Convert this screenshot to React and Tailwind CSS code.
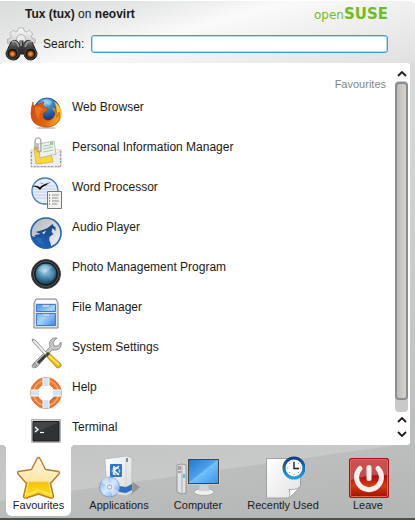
import React from "react";

function BinocularsIcon() {
  return (
    <svg viewBox="0 0 34 34" className="size-[34px] shrink-0" aria-hidden="true">
      <defs>
        <linearGradient id="gear" x1="0" y1="0" x2="0" y2="1">
          <stop offset="0" stopColor="#fafafa" />
          <stop offset="1" stopColor="#c6c6c6" />
        </linearGradient>
        <radialGradient id="lens">
          <stop offset="0" stopColor="#ffb050" />
          <stop offset="0.5" stopColor="#d56a12" />
          <stop offset="1" stopColor="#5b2505" />
        </radialGradient>
        <linearGradient id="barrel" x1="0" y1="0" x2="0" y2="1">
          <stop offset="0" stopColor="#8a8a8a" />
          <stop offset="0.4" stopColor="#3a3a3a" />
          <stop offset="1" stopColor="#101010" />
        </linearGradient>
      </defs>
      <path
        d="M14.500 1h5l.7 3 2.600 1 2.700-1.700 3.400 3.300-1.700 2.700.9 2 3 .8v4h-3l-1 3H7.500l-1-3h-3v-4l3-.8.9-2-1.700-2.700L9.100 3.300 11.800 5l2-1z"
        fill="url(#gear)"
        stroke="#aaa"
        strokeWidth="0.8"
      />
      <circle cx="17" cy="12" r="4.500" fill="#ececec" stroke="#b5b5b5" />
      <path d="M7 15q3-3 6-1l3 4h3l3-4q3-2 6 1l5 11q0 6-6 7-6 0-7-6h-4q-1 6-7 6-7-1-7-7z" fill="url(#barrel)" stroke="#242424" />
      <path d="M8 15q3-2 5 1l2 4M28 15q-3-2-5 1l-2 4" fill="none" stroke="#aaa" strokeWidth="1.2" />
      <path d="M15.500 13.500h4v7h-4z" fill="#333" />
      <path d="M16 14h2v5h-2z" fill="#888" />
      <circle cx="8.500" cy="26.500" r="5.500" fill="#171717" stroke="#555" />
      <circle cx="26.500" cy="26.500" r="5.500" fill="#171717" stroke="#555" />
      <circle cx="8.500" cy="27" r="3.600" fill="url(#lens)" />
      <circle cx="26.500" cy="27" r="3.600" fill="url(#lens)" />
    </svg>
  );
}

function FirefoxIcon() {
  return (
    <>
      <defs>
        <radialGradient id="ffGlobe" cx="0.45" cy="0.15" r="0.8">
          <stop offset="0" stopColor="#8fd0f2" />
          <stop offset="0.4" stopColor="#2f7cc0" />
          <stop offset="1" stopColor="#0c2468" />
        </radialGradient>
        <linearGradient id="ffTail" x1="0" y1="0.3" x2="1" y2="0.5">
          <stop offset="0" stopColor="#d9480c" />
          <stop offset="0.6" stopColor="#e06a10" />
          <stop offset="1" stopColor="#f3a526" />
        </linearGradient>
      </defs>
      <ellipse cx="16" cy="31" rx="10" ry="1.500" fill="#000" opacity="0.2" />
      <circle cx="17" cy="14" r="13" fill="url(#ffGlobe)" stroke="#14397c" strokeWidth="0.8" />
      <path d="M14 4q4-2 8 1l-2 3-4-1-3 2z" fill="#a5dcf5" opacity="0.6" />
      <path d="M25 5q6 4 6.500 12-1 9-9 12 4-7 3-13l-3-5q3 0 4 3 0-5-2-9z" fill="#f9cb3c" stroke="#dc9318" strokeWidth="0.500" />
      <path
        d="M3 5q0 3 1 4 2-2 5-1 2-3 5-3-2 3 0 5l4 1q0 3-3 4l-2 2q-1 4 3 6 4 1 7-2 3-3 2-9 3 4 2 8 2-2 2-5 2 7-2 11-5 5-13 4Q1 28 1 17 1 10 3 5z"
        fill="url(#ffTail)"
        stroke="#b43b08"
        strokeWidth="0.6"
      />
      <path d="M5 10q3-1 5 0 2 2 4 2-3 2-4 4-2 3 0 7-5-3-5-13z" fill="#f08a2c" opacity="0.6" />
    </>
  );
}

function MailIcon() {
  return (
    <>
      <path d="M1 13h30v17H1z" fill="#eceef2" stroke="#c6c8cc" />
      <path d="M1.500 15v15M30.500 14v15M4 29.500h26" stroke="#dd8080" strokeWidth="1.200" strokeDasharray="2 5" />
      <path d="M1.500 18v12M30.500 17v12M7 29.500h23" stroke="#7f9fd8" strokeWidth="1.200" strokeDasharray="2 5" />
      <path d="M2 13l12 12h5l11-12" fill="#f6f7f9" stroke="#d0d3d8" strokeWidth="0.700" />
      <path d="M4 10l16 2 3 13-17 2z" fill="#fbd93c" stroke="#d6a518" strokeWidth="0.700" />
      <path d="M8 7l16-3 2 13-16 4z" fill="#edf2ea" stroke="#a9b4a6" strokeWidth="0.800" />
      <path d="M13 9l8-1M13 12l10-2M13 15l10-2" stroke="#a8c4b2" />
      <path d="M20 5h3v3h-3z" fill="#9fc9a6" />
      <path d="M5 13V5q0-4 3-4t3 4v8q0 2-2 2t-2-2V6" fill="none" stroke="#9b9b9b" strokeWidth="1.200" />
    </>
  );
}

function WriterIcon() {
  return (
    <>
      <circle cx="15" cy="14" r="13" fill="#e5effa" stroke="#4779bb" strokeWidth="1.300" />
      <path d="M5 9h20M3 12h24M3 15h24M3 18h23M5 21h20" stroke="#bdcce5" />
      <path d="M9 6q4-1 5 1.500Q17 5 21 5.500q-4 1-6 3.500-2-3-6-3z" fill="#55606c" />
      <path d="M2 9q6-1 8 1.500Q12 7 18 7q-5 2-8 6-2-3-8-4z" fill="#080808" />
      <path d="M17.500 14.500h14v17h-14z" fill="#f2f2ef" stroke="#777" />
      <path d="M22 18h7M22 21h6M22 24h7M22 27h5" stroke="#8f8f8f" />
      <path d="M19 18h1M19 21h1M19 24h1M19 27h1" stroke="#444" />
    </>
  );
}

function AmarokIcon() {
  return (
    <>
      <defs>
        <linearGradient id="moon" x1="0" y1="0" x2="1" y2="1">
          <stop offset="0" stopColor="#aeb2ba" />
          <stop offset="1" stopColor="#f6f6f6" />
        </linearGradient>
        <linearGradient id="wolf" x1="0" y1="0" x2="0" y2="1">
          <stop offset="0" stopColor="#1a4583" />
          <stop offset="1" stopColor="#1e63b8" />
        </linearGradient>
      </defs>
      <circle cx="16" cy="16" r="15" fill="url(#moon)" stroke="#2463ac" strokeWidth="1.600" />
      <path
        d="M1.500 19l4 1-1-2 6-1-5-2 7-2 5-2 5-4 1 2 2 1 0 4-3-3-1 4 2 2-4 3q-1 3 1 6l1 5q-5 1-9 .5Q4 28 1.500 19z"
        fill="url(#wolf)"
      />
      <path d="M12 16l4-2.500-2 3.500z" fill="#fff" />
      <path d="M5 22q4-3 7 0l2 6q-6-1-9-6z" fill="#2c74cc" opacity="0.600" />
    </>
  );
}

function LensIcon() {
  return (
    <>
      <defs>
        <radialGradient id="glass" cx="0.45" cy="0.35" r="0.65">
          <stop offset="0" stopColor="#b4dbed" />
          <stop offset="0.5" stopColor="#4c89ad" />
          <stop offset="1" stopColor="#12354f" />
        </radialGradient>
      </defs>
      <circle cx="16" cy="17" r="14.500" fill="#202020" stroke="#484848" />
      <circle cx="16" cy="17" r="12.500" fill="none" stroke="#5d5d5d" />
      <circle cx="16" cy="17" r="11" fill="url(#glass)" stroke="#0a1720" />
      <path d="M8 14q2-6 8-6l6 2-7 6z" fill="#d7edf6" opacity="0.3" />
      <path d="M17 17l8-4q1 8-5 11z" fill="#9bd1ed" opacity="0.2" />
    </>
  );
}

function CabinetIcon() {
  return (
    <>
      <defs>
        <linearGradient id="drawer" x1="0" y1="0" x2="1" y2="1">
          <stop offset="0" stopColor="#4b93e8" />
          <stop offset="0.500" stopColor="#a6d4fb" />
          <stop offset="1" stopColor="#3d86df" />
        </linearGradient>
      </defs>
      <path d="M6 2h20l2 4v25H4V6z" fill="#e1e1e1" stroke="#858585" />
      <path d="M7 3h18l2 3H5z" fill="#fafafa" />
      <path d="M6.500 7.500h19v7h-19zM6.500 16.500h19v12h-19z" fill="url(#drawer)" stroke="#3b7cc8" />
      <path d="M12 8h8v1l-1 1h-6l-1-1zM12 17h8v1l-1 1h-6l-1-1z" fill="#f5f5f5" stroke="#7393b5" strokeWidth="0.700" />
    </>
  );
}

function ToolsIcon() {
  return (
    <>
      <path d="M3 27L20 10q-2-7 4-9l3 0-4 4 1 4 4 0 3-4q1 7-5 8l-4 0L7 30q-5 2-5-1z" fill="#c8c8c8" stroke="#7c7c7c" strokeWidth="0.800" />
      <path d="M7 25l8-8 2 2-8 8z" fill="#3b3b3b" />
      <circle cx="5" cy="28" r="1.300" fill="#fff" stroke="#777" />
      <path d="M2 2l3 1 13 14-2 2L3 5z" fill="#eee" stroke="#777" strokeWidth="0.800" />
      <path d="M15 18l3-3 13 12q1 4-4 4z" fill="#efb310" stroke="#b27d06" strokeWidth="0.700" />
      <path d="M18 18l11 10" stroke="#ffe35b" strokeWidth="2" />
      <path d="M15 18l3-3 2 2-3 3z" fill="#444" />
    </>
  );
}

function HelpIcon() {
  return (
    <>
      <rect x="8" y="1" width="16" height="30" rx="3" fill="none" stroke="#d4d4d4" />
      <rect x="1" y="8" width="30" height="16" rx="3" fill="none" stroke="#d4d4d4" />
      <circle cx="16" cy="16" r="12" fill="none" stroke="#c96a34" strokeWidth="7" />
      <circle cx="16" cy="16" r="12" fill="none" stroke="#ef772e" strokeWidth="6" />
      <circle cx="16" cy="16" r="12.500" fill="none" stroke="#ffa76a" strokeWidth="1.500" />
      <path d="M13 1h6v8h-6zM13 23h6v8h-6zM1 13h8v6H1zM23 13h8v6h-8z" fill="#cfe3fb" />
      <path d="M13 1v8M19 1v8M13 23v8M19 23v8M1 13h8M1 19h8M23 13h8M23 19h8" stroke="#fff" />
      <path d="M20 26l2-4 4-1" fill="none" stroke="#777" />
    </>
  );
}

function TerminalIcon() {
  return (
    <>
      <path d="M1.500 2.500h29v23h-29z" fill="#c9cbcb" stroke="#b4b4b4" />
      <path d="M3 4.500h26v19.500H3z" fill="#303233" stroke="#191919" />
      <path d="M3.500 5h25L3.500 17z" fill="#424546" />
      <path d="M5 10l3 2.500-3 2.500" fill="none" stroke="#fff" strokeWidth="1.300" />
      <path d="M10 15.500h4" stroke="#fff" strokeWidth="1.200" />
    </>
  );
}

function StarIcon() {
  return (
    <>
      <defs>
        <linearGradient id="star" x1="0" y1="0" x2="0" y2="1">
          <stop offset="0" stopColor="#fff6e2" />
          <stop offset="0.580" stopColor="#fde6a4" />
          <stop offset="0.620" stopColor="#f2c40a" />
          <stop offset="1" stopColor="#ffe21e" />
        </linearGradient>
      </defs>
      <path
        d="M21.500 2.500q1 0 2 2l5 10 13 2q2 1 0 3l-8 9 3 13q0 2-3 1.500l-12-4-12 4q-3 .5-3-1.500l3-13-8-9q-2-2 0-3l13-2 5-10q1-2 2-2z"
        fill="url(#star)"
        stroke="#bf7a26"
        strokeWidth="1.400"
        strokeLinejoin="round"
      />
      <path d="M21.500 6l5 10 13 2-8 9 3 13-13-5-13 5 3-13-8-9 13-2z" fill="none" stroke="#fff8d6" opacity="0.600" />
    </>
  );
}

function ApplicationsIcon() {
  return (
    <>
      <defs>
        <linearGradient id="box" x1="0" y1="0" x2="1" y2="1">
          <stop offset="0" stopColor="#fff" />
          <stop offset="1" stopColor="#d4d7da" />
        </linearGradient>
        <linearGradient id="disc" x1="0" y1="0" x2="1" y2="1">
          <stop offset="0" stopColor="#6ea6df" />
          <stop offset="0.500" stopColor="#d6ebff" />
          <stop offset="1" stopColor="#5d96d6" />
        </linearGradient>
      </defs>
      <path d="M34 26l9 6-9 8z" fill="#000" opacity="0.220" />
      <path d="M8 4l22-3 5 2v35l-6 3-19-3z" fill="url(#box)" stroke="#b5b8bb" strokeWidth="0.800" />
      <path d="M29 3v38" stroke="#d4d4d4" />
      <path d="M22 31l7 1 6-3v6l-6 3-7-1z" fill="#2f70be" />
      <rect x="13" y="9" width="12" height="13" rx="1" fill="#3273c2" />
      <circle cx="19" cy="16" r="3.500" fill="none" stroke="#c3dbf6" strokeWidth="1.500" strokeDasharray="1.500 1" />
      <path d="M17 11v9M22 11l-5 4.500 5 4.500" fill="none" stroke="#fff" strokeWidth="1.400" />
      <path d="M29 3h2v4h-2z" fill="#888" />
      <circle cx="12.500" cy="32" r="10" fill="url(#disc)" stroke="#6f9ac8" strokeWidth="0.800" />
      <path d="M12.500 32L4 27q3-5 7-5zM12.500 32l9 4q-2 4-6 5z" fill="#fff" opacity="0.450" />
      <circle cx="12.500" cy="32" r="3.500" fill="#a4bede" stroke="#eff6ff" />
      <circle cx="12.500" cy="32" r="1.500" fill="#eee" />
    </>
  );
}

function ComputerIcon() {
  return (
    <>
      <defs>
        <linearGradient id="screen" x1="0" y1="0" x2="1" y2="1">
          <stop offset="0" stopColor="#2477c7" />
          <stop offset="0.480" stopColor="#4fa2ea" />
          <stop offset="0.500" stopColor="#74c0fa" />
          <stop offset="1" stopColor="#3797ed" />
        </linearGradient>
      </defs>
      <path d="M1 10l5-1 4 1v28l-4 1-5-2z" fill="#e2e2e2" stroke="#888" strokeWidth="0.800" />
      <path d="M6 10v28" stroke="#aaa" />
      <path d="M2 12h3M2 14h3M2 17h3" stroke="#666" />
      <path d="M7 19h2v4H7z" fill="#58c0ec" />
      <ellipse cx="28" cy="37" rx="10" ry="3.500" fill="#f0f0f0" stroke="#aaa" />
      <path d="M24 29h8l1 7h-10z" fill="#d2d2d2" />
      <path d="M11.500 3.500h32v26h-32z" fill="#444" stroke="#ccc" />
      <path d="M13 5h29v23H13z" fill="url(#screen)" />
    </>
  );
}

function RecentIcon() {
  return (
    <>
      <defs>
        <linearGradient id="paper" x1="0" y1="0" x2="1" y2="1">
          <stop offset="0" stopColor="#fff" />
          <stop offset="1" stopColor="#e3e3e3" />
        </linearGradient>
        <linearGradient id="rim" x1="0" y1="0" x2="0" y2="1">
          <stop offset="0" stopColor="#123f83" />
          <stop offset="1" stopColor="#20a0df" />
        </linearGradient>
      </defs>
      <path d="M5.500 3.500h34v28L28 43H5.500z" fill="url(#paper)" stroke="#a1a1a1" />
      <path d="M28 43q2-5 0-9 5 2 11.500-2.500z" fill="#fff" stroke="#aaa" />
      <circle cx="33" cy="13" r="10" fill="#ddd" stroke="url(#rim)" strokeWidth="3" />
      <circle cx="33" cy="13" r="8" fill="#fbfbfb" />
      <path d="M33 6v1M33 19v1M26 13h1M39 13h1M28 8l1 1M38 8l-1 1M28 18l1-1M38 18l-1-1" stroke="#999" />
      <path d="M33 7v6.500h5" fill="none" stroke="#222" strokeWidth="1.400" />
    </>
  );
}

function LeaveIcon() {
  return (
    <>
      <defs>
        <linearGradient id="leave" x1="0" y1="0" x2="0" y2="1">
          <stop offset="0" stopColor="#b81818" />
          <stop offset="0.480" stopColor="#b01010" />
          <stop offset="0.700" stopColor="#d53c05" />
          <stop offset="1" stopColor="#a51205" />
        </linearGradient>
      </defs>
      <rect x="3" y="3" width="40" height="40" rx="2.500" fill="#a81212" />
      <rect x="4.500" y="4.500" width="37" height="37" rx="1.500" fill="url(#leave)" stroke="#e8625a" />
      <path d="M5 5h36v15Q24 19 5 25z" fill="#fff" opacity="0.250" />
      <path d="M14 13.500a12.500 12.500 0 1 0 18 0" fill="none" stroke="#f1efef" strokeWidth="5" strokeLinecap="round" />
      <path d="M23 12.500v11" stroke="#f1efef" strokeWidth="5" strokeLinecap="round" />
    </>
  );
}

const favourites = [
  ["Web Browser", FirefoxIcon],
  ["Personal Information Manager", MailIcon],
  ["Word Processor", WriterIcon],
  ["Audio Player", AmarokIcon],
  ["Photo Management Program", LensIcon],
  ["File Manager", CabinetIcon],
  ["System Settings", ToolsIcon],
  ["Help", HelpIcon],
  ["Terminal", TerminalIcon],
];

const tabs = [
  ["Applications", ApplicationsIcon],
  ["Computer", ComputerIcon],
  ["Recently Used", RecentIcon],
  ["Leave", LeaveIcon],
];

function Tab({ label, Icon, active }) {
  return (
    <button
      type="button"
      role="tab"
      aria-selected={active}
      className={
        active
          ? "relative flex flex-col items-center rounded-b-md bg-white pt-[10px] before:absolute before:top-0 before:-left-1 before:size-1 before:bg-[radial-gradient(circle_at_0_100%,transparent_4px,white_4px)] after:absolute after:top-0 after:-right-1 after:size-1 after:bg-[radial-gradient(circle_at_100%_100%,transparent_4px,white_4px)]"
          : "flex flex-col items-center pt-[10px]"
      }
    >
      <svg viewBox="0 0 44 44" className="size-11" aria-hidden="true">
        <Icon />
      </svg>
      <span className="text-[11px] leading-3 whitespace-nowrap">{label}</span>
    </button>
  );
}

function ArrowButton({ label, up }) {
  return (
    <button type="button" aria-label={label} className="flex h-[14px] w-full items-center justify-center">
      <svg viewBox="0 0 10 6" className="h-[6px] w-[10px]" aria-hidden="true">
        <path d={up ? "M1 5l4-4 4 4" : "M1 1l4 4 4-4"} fill="none" stroke="#1c1c1c" strokeWidth="1.800" />
      </svg>
    </button>
  );
}

export default function App() {
  return (
    <div className="flex h-screen flex-col overflow-hidden rounded-tr-md border-b-2 border-[#465348] bg-linear-to-b from-[#e0e0e0] to-[#b4b8b7] font-['Liberation_Sans',Arial,sans-serif] text-[#1a1a1a]">
      <header className="border-t border-white bg-[linear-gradient(165deg,#dadcdb_0%,#e6e7e7_25%,#fafafa_45%,#f0f0f0_65%,#e0e0e0_100%)] pb-[2px]">
        <div className="flex h-[26px] items-center justify-between pr-[27px] pl-[25px]">
          <p className="text-[12px] leading-4">
            <b>Tux (tux)</b> on <b>neovirt</b>
          </p>
          <p className="flex items-baseline font-['DejaVu_Sans',sans-serif] leading-4 text-[#73ba25]">
            <span className="text-[12px]">open</span>
            <b className="text-[15px]">SUSE</b>
          </p>
        </div>
        <div className="flex h-[34px] items-center pr-[27px] pl-1">
          <BinocularsIcon />
          <label htmlFor="search" className="w-[53px] pl-[5px] text-[12px]">
            Search:
          </label>
          <input
            id="search"
            type="text"
            autoFocus
            className="h-[18px] min-w-0 flex-1 rounded-[3px] border border-[#3a9fd8] bg-white px-[2px] text-[12px] caret-black shadow-[inset_0_0_0_1px_#b5ddf3] outline-none"
          />
        </div>
      </header>

      <main className="mr-[5px] flex min-h-0 flex-1 overflow-hidden rounded-t-[3px] rounded-br-[3px] bg-white">
        <section className="min-w-0 flex-1 overflow-hidden pt-3" aria-label="Favourites">
          <h2 className="mb-1 pr-[9px] text-right text-[11px] leading-[18px] text-[#868686]">Favourites</h2>
          <ul>
            {favourites.map(([label, Icon]) => (
              <li key={label} className="h-10">
                <button type="button" className="flex w-full items-start gap-[10px] pl-[30px] text-left">
                  <svg viewBox="0 0 32 32" className="size-8 shrink-0" aria-hidden="true">
                    <Icon />
                  </svg>
                  <span className="text-[12px] leading-[20px]">{label}</span>
                </button>
              </li>
            ))}
          </ul>
        </section>
        <div className="mr-[2px] flex w-[13px] shrink-0 flex-col pt-1 pb-1">
          <ArrowButton label="Scroll up" up />
          <div className="mb-[1px] flex-1 rounded-[4px] bg-[#c9c9c9] pt-[1px] pb-3">
            <div className="h-full rounded-[4px] border-2 border-[#8c8c8c] bg-linear-to-r from-[#bfbbb9] to-[#d5d2d0]" />
          </div>
          <ArrowButton label="Scroll up one row" up />
          <ArrowButton label="Scroll down" />
        </div>
      </main>

      <footer
        role="tablist"
        className="grid h-[73px] shrink-0 grid-cols-[65fr_7fr_82fr_76fr_94fr_76fr] bg-[linear-gradient(172deg,#c2c4c3_0%,#c8caca_42%,#bcbebe_43%,#b3b6b5_100%)] pr-[9px] pb-[2px] pl-[6px]"
      >
        <Tab label="Favourites" Icon={StarIcon} active />
        <span />
        {tabs.map(([label, Icon]) => (
          <Tab key={label} label={label} Icon={Icon} active={false} />
        ))}
      </footer>
    </div>
  );
}
